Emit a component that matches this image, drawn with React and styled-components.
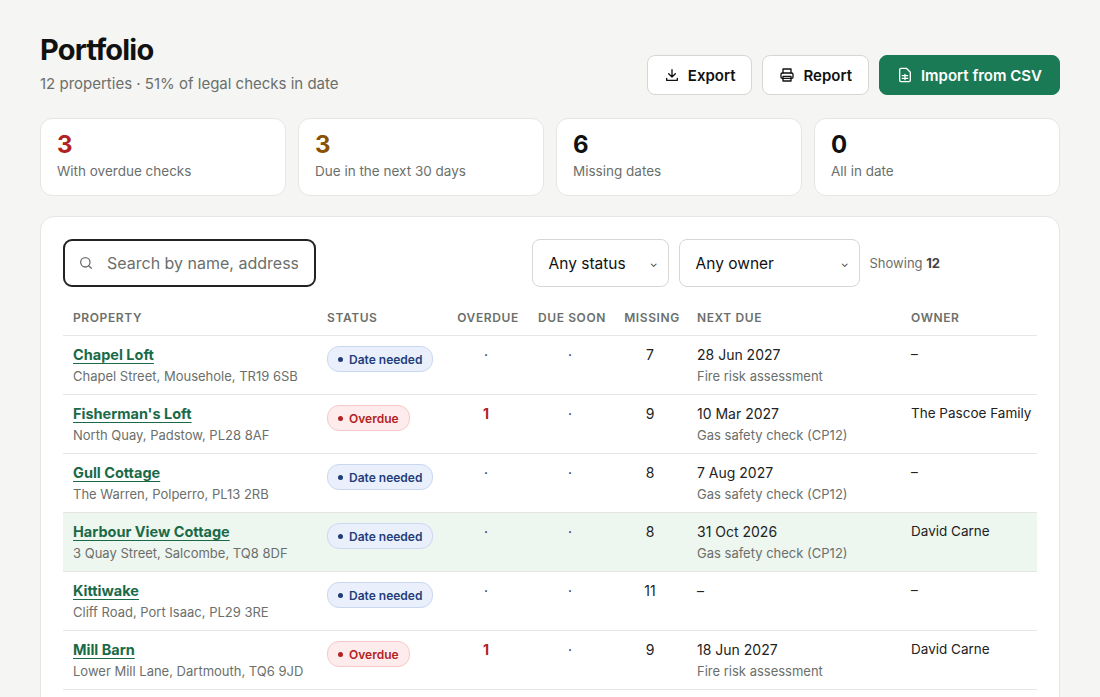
import React from "react";
import styled, { createGlobalStyle } from "styled-components";

const G = createGlobalStyle`
  body { margin:0; background:#f5f5f3; font-family: Inter, "Noto Sans", sans-serif; color:#111; }
`;
const Page = styled.div`padding:32px 40px 0;`;
const Head = styled.div`display:flex;justify-content:space-between;align-items:flex-start;`;
const Title = styled.h1`margin:0;font-size:29px;font-weight:700;letter-spacing:-0.8px;line-height:36px;`;
const Sub = styled.div`margin-top:6px;font-size:15px;color:#6b6f6c;`;
const Btns = styled.div`display:flex;gap:10px;margin-top:23px;`;
const Btn = styled.button`
  height:40px;display:flex;align-items:center;gap:8px;padding:0 16px;border-radius:8px;
  font:600 15px Inter,sans-serif;cursor:pointer;
  border:1px solid ${p=>p.$primary?"#1a7a55":"#d6d6d3"};
  background:${p=>p.$primary?"#1a7a55":"#fff"};color:${p=>p.$primary?"#fff":"#111"};
  ${p=>p.$primary&&"padding:0 17px;"}
`;
const Stats = styled.div`display:grid;grid-template-columns:repeat(4,1fr);gap:12px;margin-top:23px;`;
const Stat = styled.div`background:#fff;border:1px solid #e6e6e3;border-radius:12px;padding:12px 16px 14px;height:50px;`;
const StatNum = styled.div`font-size:24px;font-weight:700;color:${p=>p.$c};line-height:28px;`;
const StatLbl = styled.div`font-size:13.5px;color:#6b6f6c;margin-top:4px;`;
const Card = styled.div`margin-top:20px;background:#fff;border:1px solid #e6e6e3;border-radius:14px;padding:22px 22px 0;`;
const Bar = styled.div`display:flex;align-items:center;`;
const Search = styled.div`width:253px;height:48px;box-sizing:border-box;border:2px solid #222;border-radius:9px;display:flex;align-items:center;gap:13px;padding:0 16px 0 13px;color:#6b6f6c;font-size:16px;
  svg{flex-shrink:0;}`;
const SearchText = styled.span`overflow:hidden;white-space:nowrap;flex:1;`;
const Sel = styled.div`height:48px;box-sizing:border-box;width:${p=>p.$w}px;border:1px solid #d6d6d3;border-radius:8px;display:flex;align-items:center;justify-content:space-between;padding:0 10px 0 16px;font-size:15.5px;margin-right:10px;`;
const Showing = styled.div`font-size:13px;color:#6b6f6c;b{color:#444;}`;
const Table = styled.table`width:974px;border-collapse:collapse;margin-top:14px;table-layout:fixed;`;
const Th = styled.th`text-align:${p=>p.$a||"left"};font-size:12px;font-weight:600;letter-spacing:0.6px;color:#6b6f6c;padding:9px 6px 10px 10px;white-space:nowrap;border-bottom:1px solid #e6e6e3;`;
const Tr = styled.tr`background:${p=>p.$hl?"#eef6f0":"transparent"};`;
const Td = styled.td`vertical-align:top;padding:10px 10px 0;height:48px;border-bottom:1px solid #e6e6e3;font-size:14px;white-space:nowrap;text-align:${p=>p.$a||"left"};color:${p=>p.$c||"#222"};`;
const Name = styled.a`color:#1a6a48;font-weight:700;font-size:14.5px;text-decoration:underline;text-underline-offset:3px;`;
const Small = styled.div`font-size:13px;color:#6b6f6c;margin-top:5px;`;
const Badge = styled.span`display:inline-flex;align-items:center;gap:6px;height:24px;padding:0 10px;border-radius:12px;font-size:12px;font-weight:600;
  background:${p=>p.$k==="o"?"#fdeceb":p.$k==="s"?"#fcefc7":"#e9f0fb"};color:${p=>p.$k==="o"?"#b32222":p.$k==="s"?"#8a5a00":"#1f3d7a"};
  border:1px solid ${p=>p.$k==="o"?"#f5c9c6":p.$k==="s"?"#f3d98c":"#c9d8f0"};
  &::before{content:"";width:5px;height:5px;border-radius:50%;background:currentColor;}`;

const rows = [
  ["Chapel Loft","Chapel Street, Mousehole, TR19 6SB","d","·","7","28 Jun 2027","Fire risk assessment","–"],
  ["Fisherman's Loft","North Quay, Padstow, PL28 8AF","o","1","9","10 Mar 2027","Gas safety check (CP12)","The Pascoe Family"],
  ["Gull Cottage","The Warren, Polperro, PL13 2RB","d","·","8","7 Aug 2027","Gas safety check (CP12)","–"],
  ["Harbour View Cottage","3 Quay Street, Salcombe, TQ8 8DF","d","·","8","31 Oct 2026","Gas safety check (CP12)","David Carne",true],
  ["Kittiwake","Cliff Road, Port Isaac, PL29 3RE","d","·","11","–","","–"],
  ["Mill Barn","Lower Mill Lane, Dartmouth, TQ6 9JD","o","1","9","18 Jun 2027","Fire risk assessment","David Carne"],
  ["Old Sail Loft","Harbour Road, Fowey, PL23 1AJ","s","·","5","12 Jul 2026","Electrical safety (EICR)","–"],
];

const I = ({children}) => <svg width="16" height="16" viewBox="0 0 24 24" fill="none" stroke="currentColor" strokeWidth="2" strokeLinecap="round" strokeLinejoin="round">{children}</svg>;

export default function App(){
  return <Page><G/>
    <Head>
      <div><Title>Portfolio</Title><Sub>12 properties · 51% of legal checks in date</Sub></div>
      <Btns>
        <Btn><I><path d="M12 4v11M7 10l5 5 5-5M4 17v3h16v-3"/></I>Export</Btn>
        <Btn><I><path d="M6 9V3h12v6"/><rect x="3" y="9" width="18" height="8" rx="2"/><rect x="6" y="14" width="12" height="7"/></I>Report</Btn>
        <Btn $primary><I><path d="M14 2H6a2 2 0 0 0-2 2v16a2 2 0 0 0 2 2h12a2 2 0 0 0 2-2V8z"/><path d="M8 13h8M8 17h8M12 11v8"/></I>Import from CSV</Btn>
      </Btns>
    </Head>
    <Stats>
      <Stat><StatNum $c="#b32222">3</StatNum><StatLbl>With overdue checks</StatLbl></Stat>
      <Stat><StatNum $c="#8a5200">3</StatNum><StatLbl>Due in the next 30 days</StatLbl></Stat>
      <Stat><StatNum $c="#111">6</StatNum><StatLbl>Missing dates</StatLbl></Stat>
      <Stat><StatNum $c="#111">0</StatNum><StatLbl>All in date</StatLbl></Stat>
    </Stats>
    <Card>
      <Bar>
        <Search><I><circle cx="11" cy="11" r="7"/><path d="M20 20l-4-4"/></I><SearchText>Search by name, address or postcode</SearchText></Search>
        <div style={{flex:1}}/>
        <Sel $w={137}>Any status<span style={{fontSize:10}}>⌄</span></Sel>
        <Sel $w={181}>Any owner<span style={{fontSize:10}}>⌄</span></Sel>
        <Showing>Showing <b>12</b></Showing>
        <div style={{width:97}}/>
      </Bar>
      <Table>
        <colgroup><col width="254"/><col width="128"/><col width="82"/><col width="86"/><col width="74"/><col width="214"/><col width="136"/></colgroup>
        <thead><tr><Th>PROPERTY</Th><Th>STATUS</Th><Th $a="center">OVERDUE</Th><Th $a="center">DUE SOON</Th><Th $a="center">MISSING</Th><Th>NEXT DUE</Th><Th>OWNER</Th></tr></thead>
        <tbody>{rows.map(r=><Tr key={r[0]} $hl={r[8]}>
          <Td><Name>{r[0]}</Name><Small>{r[1]}</Small></Td>
          <Td><Badge $k={r[2]}>{r[2]==="o"?"Overdue":r[2]==="s"?"Due soon":"Date needed"}</Badge></Td>
          <Td $a="center" $c={r[3]==="1"?"#b32222":"#222"} style={{fontWeight:r[3]==="1"?700:400}}>{r[3]}</Td>
          <Td $a="center">·</Td>
          <Td $a="center">{r[4]}</Td>
          <Td>{r[5]}<Small>{r[6]}</Small></Td>
          <Td style={{fontSize:13.5}}>{r[7]}</Td>
        </Tr>)}</tbody>
      </Table>
    </Card>
  </Page>;
}
